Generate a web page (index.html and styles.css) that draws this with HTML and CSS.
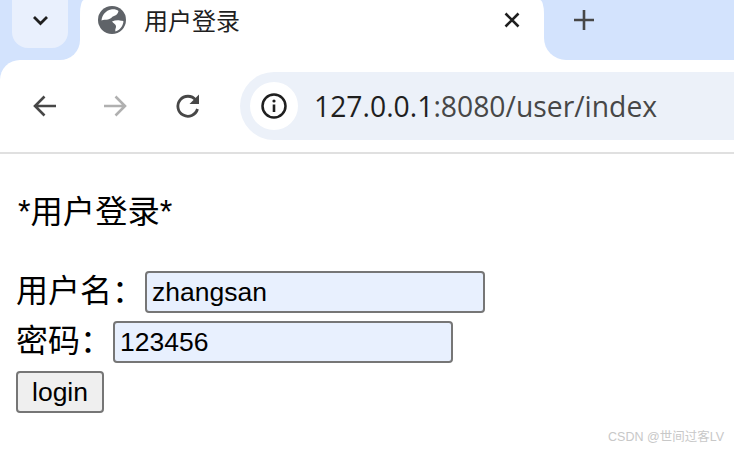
FILE: index.html
```html
<!DOCTYPE html>
<html lang="zh">
<head>
<meta charset="utf-8">
<title>用户登录</title>
<link rel="stylesheet" href="styles.css">
</head>
<body>
<div class="chrome">
  <div class="tabstrip">
    <div class="strip-left">
      <div class="tab-search">
        <svg class="icon-chevron" viewBox="0 0 17 11" width="17" height="11"><path d="M2 2l6.500 6.500L15 2" fill="none" stroke="#1f1f1f" stroke-width="2.800"/></svg>
      </div>
    </div>
    <div class="tab">
      <svg class="icon-globe" viewBox="0 0 28 28" width="28" height="28"><circle cx="14" cy="14" r="14" fill="#5f6368"/><path d="M3.500 14.500C4 9 8 4.500 13 3.500c3-.5 6 .2 7.500 1.500-.5 2.500-2 4.200-4.500 5-2.500.9-3 3-6 3.500-2.500.4-4.500.2-6.500 1z" fill="#fff"/><path d="M14 15.500c2.500-1 5-1.500 8-1 1.500.2 3 .3 3.500 1-.8 5-3.500 8.500-8 10-1-2 .8-3.500 .5-5.500-.4-2-2.500-2.500-4-4.500z" fill="#fff"/></svg>
      <span class="tab-title">用户登录</span>
      <svg class="icon-close" viewBox="0 0 16 16" width="16" height="16"><path d="M1.500 1.500l13 13M14.500 1.500l-13 13" stroke="#1f1f1f" stroke-width="2.600" fill="none"/></svg>
    </div>
    <div class="strip-right">
      <svg class="icon-plus" viewBox="0 0 20 20" width="20" height="20"><path d="M10 0v20M0 10h20" stroke="#474747" stroke-width="2.600" fill="none"/></svg>
    </div>
  </div>
  <div class="toolbar">
    <svg class="nav" viewBox="0 0 24 24" width="24" height="24"><path d="M24 12H3M12.500 2.500L3 12l9.500 9.500" fill="none" stroke="#474747" stroke-width="2.600"/></svg>
    <svg class="nav" viewBox="0 0 24 24" width="24" height="24"><path d="M0 12h21M11.500 2.500L21 12l-9.500 9.500" fill="none" stroke="#b0b0b0" stroke-width="2.600"/></svg>
    <svg class="nav" viewBox="0 0 26 26" width="26" height="26"><path d="M22.500 16a10 10 0 1 1-1.800-9" fill="none" stroke="#474747" stroke-width="2.800"/><path d="M24 1.500V11h-9.500z" fill="#474747"/></svg>
    <div class="omnibox">
      <div class="site-info">
        <svg viewBox="0 0 26 26" width="26" height="26"><circle cx="13" cy="13" r="11.500" fill="none" stroke="#1f1f1f" stroke-width="2.500"/><path d="M13 11.500v7.500" stroke="#1f1f1f" stroke-width="2.600"/><circle cx="13" cy="8" r="1.600" fill="#1f1f1f"/></svg>
      </div>
      <span class="url"><span class="host">127.0.0.1</span>:8080/user/index</span>
    </div>
  </div>
</div>
<main class="page">
  <p class="heading">*用户登录*</p>
  <form class="login">
    <div class="row"><label>用户名：</label><input class="field name" type="text" value="zhangsan"></div>
    <div class="row"><label>密码：</label><input class="field" type="text" value="123456"></div>
    <div class="row"><button type="button" class="submit">login</button></div>
  </form>
</main>
<div class="watermark">CSDN @世间过客LV</div>
</body>
</html>
```

FILE: styles.css
```css
* { box-sizing: border-box; }
html, body { margin: 0; height: 100%; }
body {
  position: relative;
  width: 734px;
  height: 450px;
  overflow: hidden;
  background: #fff;
  font-family: "Liberation Sans", "Noto Sans CJK SC", sans-serif;
  color: #000;
}
.chrome { background: #d3e3fd; border-bottom: 2px solid #e0e0e0; }
.tabstrip {
  display: flex;
  height: 60px;
  background: linear-gradient(#d3e3fd 14px, #fff 14px);
}
.strip-left {
  width: 80px;
  background: #d3e3fd;
  border-radius: 0 0 20px 0;
  padding-left: 12px;
}
.tab-search {
  width: 56px;
  height: 48px;
  background: #e9f0fd;
  border-radius: 0 0 16px 16px;
  display: flex;
  align-items: flex-start;
  justify-content: center;
  padding-top: 15px;
}
.icon-chevron { display: block; }
.tab {
  width: 464px;
  display: flex;
  align-items: center;
  padding: 0 24px 20px 18px;
  background: #fff;
  border-radius: 4px 4px 0 0 / 14px 14px 0 0;
}
.icon-globe { flex: none; }
.tab-title {
  margin-left: 18px;
  font-size: 24px;
  line-height: 40px;
  color: #1f1f1f;
  font-family: "Noto Sans CJK SC", sans-serif;
  flex: 1;
}
.strip-right {
  flex: 1;
  background: #d3e3fd;
  border-radius: 0 0 0 22px;
  padding: 10px 0 0 30px;
}
.icon-plus { display: block; }
.toolbar {
  display: flex;
  align-items: center;
  height: 92px;
  background: #fff;
  border-radius: 20px 0 0 0;
  padding-left: 32px;
}
.nav { flex: none; }
.nav:nth-child(2) { margin-left: 48px; }
.nav:nth-child(3) { margin-left: 47px; }
.omnibox {
  display: flex;
  align-items: center;
  flex: 1;
  height: 68px;
  margin-left: 39px;
  padding-left: 10px;
  background: #ecf1f9;
  border-radius: 34px 0 0 34px;
}
.site-info {
  width: 48px;
  height: 48px;
  border-radius: 50%;
  background: #fff;
  display: flex;
  align-items: center;
  justify-content: center;
}
.url {
  margin-left: 16px;
  font-family: "Open Sans", sans-serif;
  font-size: 28.300px;
  color: #474747;
  white-space: nowrap;
}
.host { color: #1f1f1f; }
.page { padding: 36px 16px 0 16px; }
.heading { margin: 0 0 33px 2px; font-size: 32.300px; line-height: 44px; }
.row { display: flex; align-items: center; height: 50px; }
.row label { font-size: 32px; line-height: 42px; margin-bottom: 2px; white-space: nowrap; }
.field {
  width: 340px;
  height: 42px;
  margin: 0 0 0 1px;
  padding: 0 5px;
  border: 2px solid #767676;
  border-radius: 4px;
  background: #e8f0fe;
  font: 26.500px "Liberation Sans", sans-serif;
  color: #000;
}
.submit {
  width: 88px;
  height: 42px;
  padding: 0;
  border: 2px solid #767676;
  border-radius: 4px;
  background: #efefef;
  font: 26.500px "Liberation Sans", sans-serif;
  color: #000;
}
.watermark {
  position: absolute;
  right: 10px;
  top: 429px;
  font-size: 12.500px;
  line-height: 16px;
  color: #c8c8c8;
  white-space: nowrap;
}
```
